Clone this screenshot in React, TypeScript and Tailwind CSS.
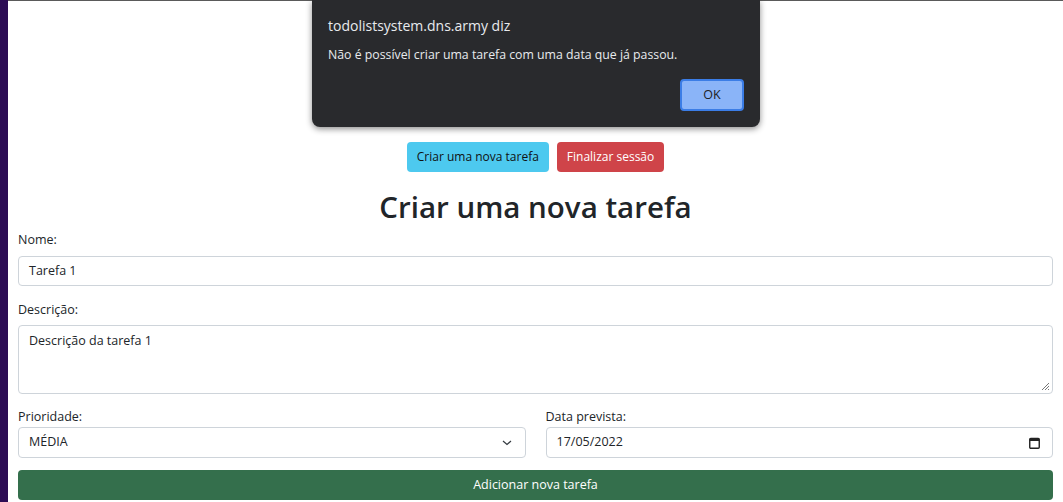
import React from "react";

export default function App() {
  const font = { fontFamily: '"Open Sans", "Noto Sans", sans-serif' };
  return (
    <div className="relative w-[1063px] h-[502px] overflow-hidden bg-white flex" style={font}>
      <div className="w-[8px] h-full bg-[#2c0c54] shrink-0" />
      <div className="flex-1 flex flex-col border-t border-[#5a5a5a]">
        <div className="h-[141px]" />
        <div className="flex justify-center gap-[8px]">
          <button className="h-[30px] px-[10px] rounded-[4px] bg-[#4dc9ef] text-[#111] text-[12px]">
            Criar uma nova tarefa
          </button>
          <button className="h-[30px] px-[10px] rounded-[4px] bg-[#cf4449] text-white text-[12px]">
            Finalizar sessão
          </button>
        </div>
        <h2 className="text-center text-[29.5px] font-semibold text-[#212529] mt-[16px] leading-[38px]">
          Criar uma nova tarefa
        </h2>
        <div className="px-[10px] mt-[5px] text-[#212529]">
          <label className="block text-[12.5px] leading-[18px]">Nome:</label>
          <div className="mt-[7px] h-[30px] border border-[#ced4da] rounded-[4px] flex items-center px-[10px] text-[12.5px]">
            Tarefa 1
          </div>
          <label className="block text-[12.5px] leading-[18px] mt-[15px]">Descrição:</label>
          <div className="relative mt-[6px] h-[69px] border border-[#ced4da] rounded-[4px] px-[10px] pt-[6px] text-[12.5px]">
            Descrição da tarefa 1
            <svg className="absolute right-[2px] bottom-[2px]" width="9" height="9" viewBox="0 0 9 9">
              <path d="M8 1 L1 8 M8 4 L4 8 M8 7 L7 8" stroke="#777" strokeWidth="1" />
            </svg>
          </div>
          <div className="grid grid-cols-2 gap-[20px] mt-[14px]">
            <div>
              <label className="block text-[12.5px] leading-[18px]">Prioridade:</label>
              <div className="mt-[1px] h-[31px] border border-[#ced4da] rounded-[4px] flex items-center justify-between px-[10px] text-[12.5px]">
                <span>MÉDIA</span>
                <svg width="12" height="8" viewBox="0 0 12 8" className="mr-[2px]">
                  <path d="M2 2 L6 5.5 L10 2" fill="none" stroke="#343a40" strokeWidth="1.2" />
                </svg>
              </div>
            </div>
            <div>
              <label className="block text-[12.5px] leading-[18px]">Data prevista:</label>
              <div className="mt-[1px] h-[31px] border border-[#ced4da] rounded-[4px] flex items-center justify-between pl-[10px] pr-[12px] text-[12.5px]">
                <span>17/05/2022</span>
                <svg width="11" height="12" viewBox="0 0 11 12">
                  <rect x="0.75" y="1.5" width="9.5" height="9.75" rx="1" fill="none" stroke="#222" strokeWidth="1.4" />
                  <rect x="0.75" y="1.5" width="9.5" height="2.5" fill="#222" />
                </svg>
              </div>
            </div>
          </div>
          <button className="mt-[12px] w-full h-[30px] rounded-[4px] bg-[#346f4c] text-white text-[12.5px]">
            Adicionar nova tarefa
          </button>
        </div>
      </div>

      <div className="absolute left-[312px] top-0 w-[448px] h-[127px] bg-[#292a2d] rounded-b-[8px] shadow-[0_2px_6px_rgba(0,0,0,0.45)]">
        <div className="absolute left-[16px] top-[15px] text-[14px] text-[#e8eaed]">todolistsystem.dns.army diz</div>
        <div className="absolute left-[16px] top-[46px] text-[12.3px] text-[#e8eaed]">
          Não é possível criar uma tarefa com uma data que já passou.
        </div>
        <div className="absolute left-[368px] top-[79px] w-[64px] h-[32px] rounded-[4px] bg-[#8ab4f8] border-2 border-[#3b7de6] flex items-center justify-center text-[12.5px] text-[#202124]">
          OK
        </div>
      </div>
    </div>
  );
}
